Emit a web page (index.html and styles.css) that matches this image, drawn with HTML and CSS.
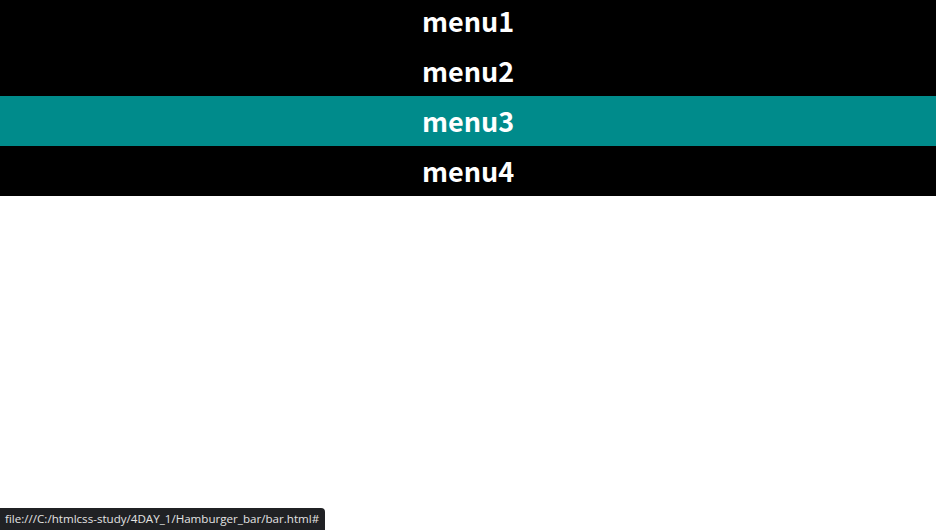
FILE: index.html
```html
<!DOCTYPE html>
<html lang="ko">
<head>
<meta charset="utf-8">
<title>Hamburger bar</title>
<link rel="stylesheet" href="styles.css">
</head>
<body>
<ul class="menu">
  <li class="menu-item"><a href="#">menu1</a></li>
  <li class="menu-item"><a href="#">menu2</a></li>
  <li class="menu-item active"><a href="#">menu3</a></li>
  <li class="menu-item"><a href="#">menu4</a></li>
</ul>
<div class="status">file:///C:/htmlcss-study/4DAY_1/Hamburger_bar/bar.html#</div>
</body>
</html>
```
FILE: styles.css
```css
html, body {
  margin: 0;
  padding: 0;
  background: #ffffff;
}
body {
  font-family: "Noto Sans CJK KR", "Noto Sans", sans-serif;
  overflow: hidden;
  height: 530px;
}
.menu {
  list-style: none;
  margin: -4px 0 0 0;
  padding: 0;
}
.menu-item {
  height: 50px;
  background: #000000;
  display: flex;
  align-items: center;
  justify-content: center;
}
.menu-item.active {
  background: #008b8b;
}
.menu-item a {
  color: #ffffff;
  text-decoration: none;
  font-weight: 700;
  font-size: 27px;
  line-height: 50px;
}
.status {
  position: fixed;
  left: 0;
  bottom: 0;
  background: #202124;
  color: #e3e3e3;
  font-family: "Open Sans", "Noto Sans", sans-serif;
  font-size: 11.6px;
  line-height: 22px;
  height: 22px;
  padding: 0 6px 0 5px;
  border-top-right-radius: 4px;
}
```
